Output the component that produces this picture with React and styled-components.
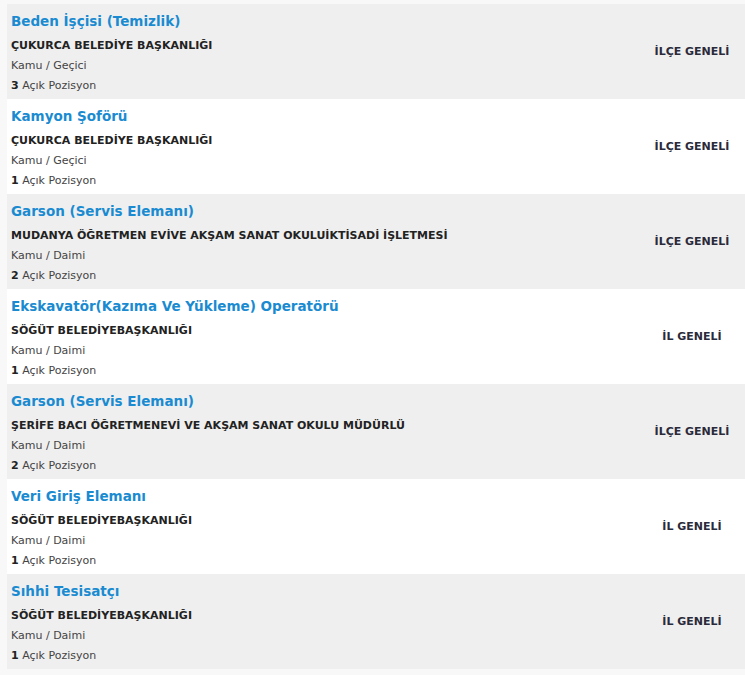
import React from 'react';
import styled, { createGlobalStyle } from 'styled-components';

const GlobalStyle = createGlobalStyle`
  body {
    margin: 0;
    background: #f8f8f8;
    font-family: "DejaVu Sans", Verdana, sans-serif;
  }
`;

const Page = styled.div`
  padding: 4px 0 6px 7px;
`;

const List = styled.div`
  display: flex;
  flex-direction: column;
`;

const Row = styled.div`
  display: flex;
  align-items: center;
  height: 95px;
  box-sizing: border-box;
  padding: 6px 0 4px 4px;
  background: ${p => (p.$odd ? '#efefef' : '#ffffff')};
`;

const Content = styled.div`
  flex: 1;
  align-self: stretch;
`;

const Title = styled.a`
  display: block;
  font-size: 13.5px;
  font-weight: bold;
  line-height: 22px;
  margin-bottom: 4px;
  color: #1a8bd1;
  text-decoration: none;
`;

const Company = styled.div`
  font-size: 11px;
  font-weight: bold;
  line-height: 20px;
  color: #222;
`;

const Info = styled.div`
  font-size: 11px;
  line-height: 20px;
  color: #444;

  b {
    color: #222;
  }
`;

const Scope = styled.div`
  width: 100px;
  margin-right: 3px;
  margin-bottom: 2px;
  text-align: center;
  font-size: 11px;
  font-weight: bold;
  color: #2a2a3a;
`;

const jobs = [
  { title: 'Beden İşçisi (Temizlik)', company: 'ÇUKURCA BELEDİYE BAŞKANLIĞI', type: 'Kamu / Geçici', count: 3, scope: 'İLÇE GENELİ' },
  { title: 'Kamyon Şoförü', company: 'ÇUKURCA BELEDİYE BAŞKANLIĞI', type: 'Kamu / Geçici', count: 1, scope: 'İLÇE GENELİ' },
  { title: 'Garson (Servis Elemanı)', company: 'MUDANYA ÖĞRETMEN EVİVE AKŞAM SANAT OKULUİKTİSADİ İŞLETMESİ', type: 'Kamu / Daimi', count: 2, scope: 'İLÇE GENELİ' },
  { title: 'Ekskavatör(Kazıma Ve Yükleme) Operatörü', company: 'SÖĞÜT BELEDİYEBAŞKANLIĞI', type: 'Kamu / Daimi', count: 1, scope: 'İL GENELİ' },
  { title: 'Garson (Servis Elemanı)', company: 'ŞERİFE BACI ÖĞRETMENEVİ VE AKŞAM SANAT OKULU MÜDÜRLÜ', type: 'Kamu / Daimi', count: 2, scope: 'İLÇE GENELİ' },
  { title: 'Veri Giriş Elemanı', company: 'SÖĞÜT BELEDİYEBAŞKANLIĞI', type: 'Kamu / Daimi', count: 1, scope: 'İL GENELİ' },
  { title: 'Sıhhi Tesisatçı', company: 'SÖĞÜT BELEDİYEBAŞKANLIĞI', type: 'Kamu / Daimi', count: 1, scope: 'İL GENELİ' },
];

const App = () => {
  return (
    <Page>
      <GlobalStyle />
      <List>
        {jobs.map((job, i) => (
          <Row key={i} $odd={i % 2 === 0}>
            <Content>
              <Title href="#">{job.title}</Title>
              <Company>{job.company}</Company>
              <Info>{job.type}</Info>
              <Info><b>{job.count}</b> Açık Pozisyon</Info>
            </Content>
            <Scope>{job.scope}</Scope>
          </Row>
        ))}
      </List>
    </Page>
  );
};

export default App;
